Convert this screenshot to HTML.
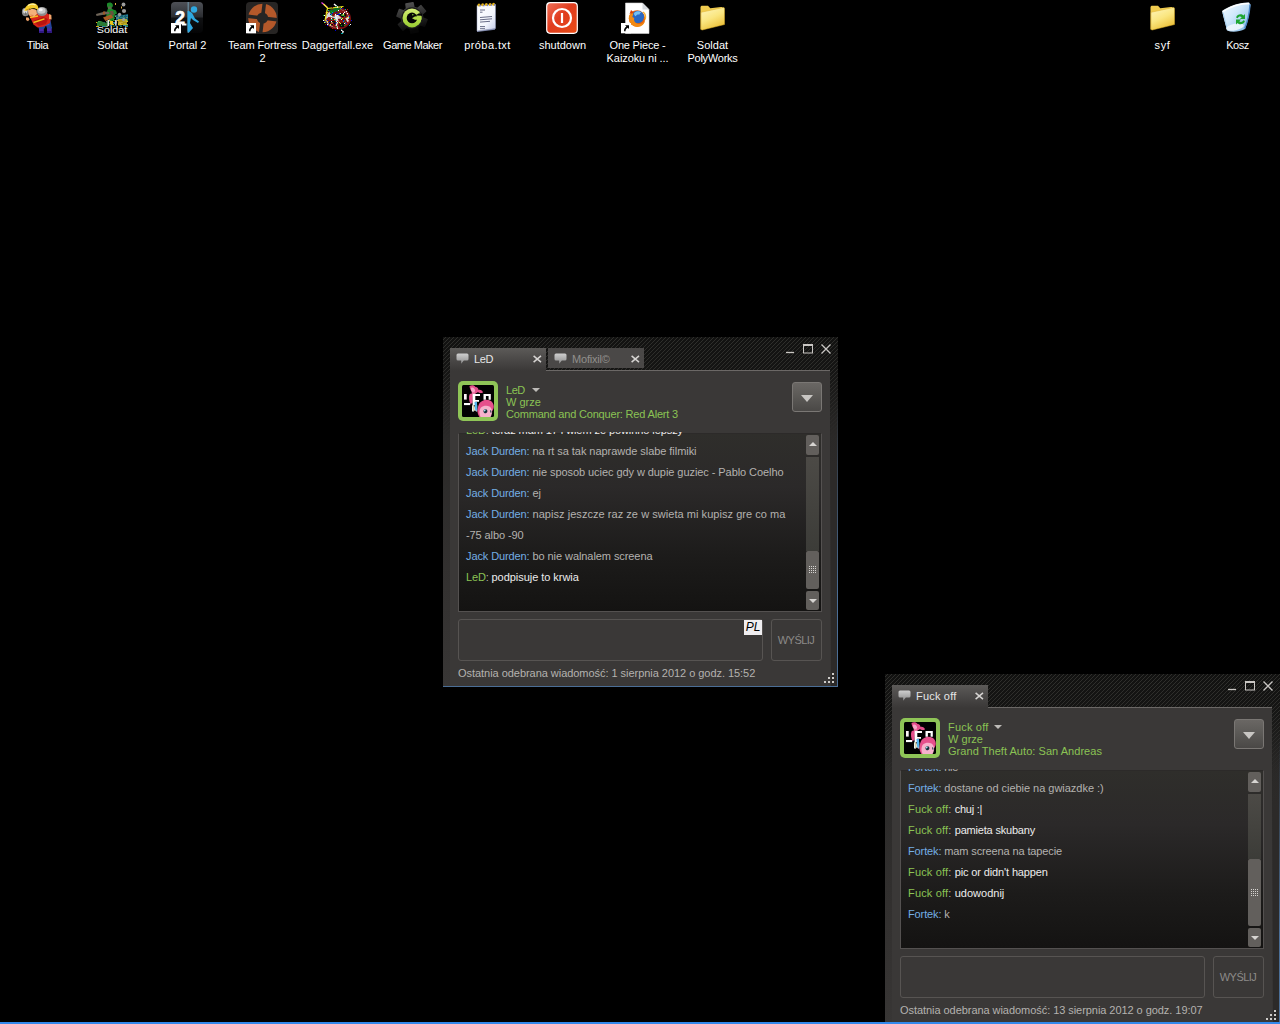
<!DOCTYPE html>
<html lang="pl">
<head>
<meta charset="utf-8">
<title>Pulpit</title>
<style>
html,body{margin:0;padding:0;background:#000;}
body{width:1280px;height:1024px;position:relative;overflow:hidden;font-family:"Liberation Sans",sans-serif;}
.ico{position:absolute;top:0;width:75px;height:70px;text-align:center;color:#fff;font-size:11px;line-height:13px;}
.ico svg{position:absolute;left:21px;top:2px;width:32px;height:32px;}
.ico .lb{position:absolute;left:-5px;width:85px;top:39px;text-shadow:1px 1px 1px #000;}
.taskline{position:absolute;left:0;top:1022px;width:1280px;height:2px;background:#3389ec;}

.win{position:absolute;width:395px;height:350px;overflow:hidden;
 background:repeating-linear-gradient(135deg,#121211 0px,#121211 1.6px,#2f2f2c 1.6px,#2f2f2c 2.8284px);
}
.win .strip{position:absolute;left:0;top:0;width:395px;height:350px;
 background:linear-gradient(to bottom,rgba(40,39,38,0) 0px,rgba(40,39,38,.15) 33px,rgba(42,41,40,.97) 100px,rgba(50,48,47,1) 230px,rgba(56,54,53,1) 350px);}
.win .rstrip{position:absolute;left:388px;top:0;width:7px;height:350px;background:linear-gradient(to bottom,rgba(44,42,41,0) 70px,rgba(44,42,41,1) 140px);}
.win .edge{position:absolute;left:0;top:0;width:395px;height:350px;box-sizing:border-box;pointer-events:none;
 border-bottom:1px solid #4b6e96;}
.win .edge:after{content:"";position:absolute;right:0;top:0;width:1px;height:350px;background:linear-gradient(to bottom,rgba(75,110,150,0) 60px,rgba(75,110,150,1) 260px);}
.panel{position:absolute;left:7px;top:33px;width:380px;height:317px;background:#3a3837;border-top:1px solid #6b6866;box-sizing:border-box;}
.tab{position:absolute;top:11px;height:22px;box-sizing:border-box;font-size:11px;line-height:22px;white-space:nowrap;}
.tab.act{background:linear-gradient(to bottom,#5c5a58 0,#474544 60%,#3a3837 100%);color:#e6e6e6;height:23px;}
.tab.ina{background:#4a4847;color:#918f8c;height:20px;top:11px;line-height:22px;}
.tab .bub{position:absolute;left:6px;top:5px;width:13px;height:12px;}
.tab .tx{position:absolute;left:24px;top:0;}
.tab .cl{position:absolute;top:7px;width:9px;height:9px;}
.wb{position:absolute;}
.av{position:absolute;left:15px;top:44px;width:40px;height:40px;border-radius:5px;background:#8fc557;}
.av svg{position:absolute;left:4px;top:4px;width:32px;height:32px;}
.who{position:absolute;left:63px;top:47px;color:#8bc354;font-size:11px;line-height:12px;white-space:nowrap;}
.who .arr{position:absolute;top:4px;width:0;height:0;border-left:4px solid transparent;border-right:4px solid transparent;border-top:4px solid #bdbbb8;}
.dd{position:absolute;left:349px;top:45px;width:30px;height:30px;border-radius:3px;box-sizing:border-box;border:1px solid #7a7774;background:linear-gradient(to bottom,#6a6764 0,#5c5a57 45%,#4a4846 100%);}
.dd i{position:absolute;left:8px;top:12px;width:0;height:0;border-left:6px solid transparent;border-right:6px solid transparent;border-top:7px solid #c8c6c3;}
.chat{position:absolute;left:15px;top:96px;width:364px;height:179px;box-sizing:border-box;border:1px solid #545150;border-top-color:#2c2a29;background:linear-gradient(to bottom,#2f2e2b 0,#2b2929 30%,#1c1b1a 70%,#141312 100%);overflow:visible;}
.mc{position:absolute;left:0;top:-2px;width:345px;height:178px;overflow:hidden;}
.msg{position:absolute;left:7px;font-size:11px;line-height:13px;color:#b4b2af;white-space:nowrap;}
.msg b{font-weight:normal;color:#74aee4;}
.msg.me b{color:#8bc354;}
.msg.me{color:#ececec;}
.msg.me i{font-style:normal;color:#b4b2af;}
.sb{position:absolute;left:347px;width:13px;border-radius:2px;background:#625f5c;}
.sbt{position:absolute;left:347px;width:13px;background:linear-gradient(to bottom,#4c4a46,#3c3c38);}
.inp{position:absolute;left:15px;top:282px;width:305px;height:42px;box-sizing:border-box;border:1px solid #575452;border-radius:3px;background:#3a3837;}
.pl{position:absolute;left:285px;top:0;width:18px;height:15px;background:#f0eef0;color:#000;font-style:italic;font-size:12px;line-height:14px;text-align:center;}
.send{position:absolute;left:328px;top:282px;width:51px;height:42px;box-sizing:border-box;border:1px solid #575452;border-radius:3px;color:#8c8a88;font-size:11px;line-height:40px;text-align:center;white-space:nowrap;text-indent:-1px;}
.status{position:absolute;left:15px;top:329px;font-size:11px;line-height:14px;color:#b4b2af;white-space:nowrap;}
.grip{position:absolute;left:381px;top:336px;width:11px;height:11px;}
</style>
</head>
<body>
<div class="ico" style="left:0px"><svg viewBox="0 0 32 32">
<path d="M18 25.500h4.700l.3 5.500h-5zM26 25h4.600l.2 6h-4.800z" fill="#4a2aa8"/>
<path d="M18.500 29h4.500v2h-4.800zM26 29h4.800v2h-4.800z" fill="#2e1880"/>
<path d="M15.500 21l14-3 1.500 8.500h-5l-1-3-2 3.500h-5z" fill="#24449a"/>
<path d="M19 22l9-2 .5 3-8 1.500z" fill="#3460c0"/>
<path d="M8.500 14l6-3 9-1.500 6.500 4.500-1 7-6 3.500-6.500 1-4-3z" fill="#d8241a"/>
<path d="M12 19l10-4 5 2-2 5-7 2z" fill="#b81410"/>
<path d="M9 15.500l8-1.500M12.500 20.500l11-3.700" stroke="#f2c21e" stroke-width="1.400" fill="none"/>
<path d="M28 12l2.300 1 .3 4.500-2.600-.5z" fill="#f2a46a"/>
<path d="M5 15.500l2.500 0 1 2-1.500 1.700-2-1.200z" fill="#f2a46a"/>
<ellipse cx="21" cy="9.500" rx="5.400" ry="4.600" fill="#8e8e8e"/><ellipse cx="20.500" cy="8.600" rx="4" ry="3.200" fill="#c8c8c8"/><ellipse cx="19.700" cy="7.800" rx="2" ry="1.500" fill="#f4f4f4"/>
<ellipse cx="4.500" cy="10" rx="3.600" ry="4.200" fill="#8a8a8a"/><ellipse cx="4.200" cy="9" rx="2.200" ry="2.600" fill="#d8d8d8"/>
<path d="M6 14l-2.500-1.500 1-3z" fill="#707070"/>
<path d="M7 8.500c2-1.500 6-2 8.500-.5l.5 4-3.500 3-4.500-1.500z" fill="#f4b07a"/>
<path d="M9 12.500l4 .5-1.500 1.500z" fill="#d88850"/>
<path d="M3.500 9c.5-5 5-8.500 10-7.500 3 .7 4.500 3.500 3.500 6.500-2.500-2-5.500-2.200-8-1-2 1-3.500 2.200-5.500 2z" fill="#f4cc2c"/>
<path d="M7 3.500c2-1.500 5-1.800 7.500-.6" stroke="#fdf2a8" stroke-width="1.300" fill="none"/>
<path d="M5 8c1.500-.3 3-1 4.500-2" stroke="#d09a10" stroke-width="1" fill="none"/>
</svg><div class="lb"><span style="letter-spacing:-0.377px;">Tibia</span></div></div>
<div class="ico" style="left:75px"><svg viewBox="0 0 32 32"><rect x="15" y="22" width="3" height="1" fill="#e0c020"/><rect x="23" y="22" width="2" height="1" fill="#2f8a3a"/><rect x="0" y="20" width="2" height="1" fill="#8a8a8a"/><rect x="14" y="16" width="3" height="1" fill="#1c5a70"/><rect x="30" y="19" width="3" height="1" fill="#e0c020"/><rect x="14" y="23" width="1" height="1" fill="#8a8a8a"/><rect x="24" y="24" width="1" height="1" fill="#2f8a3a"/><rect x="10" y="22" width="1" height="1" fill="#15401e"/><rect x="30" y="22" width="3" height="1" fill="#d8b018"/><rect x="27" y="19" width="3" height="1" fill="#1c5a70"/><rect x="8" y="20" width="1" height="1" fill="#15401e"/><rect x="27" y="23" width="2" height="1" fill="#d8b018"/><rect x="24" y="22" width="2" height="1" fill="#8a8a8a"/><rect x="26" y="22" width="1" height="1" fill="#3fa04a"/><rect x="10" y="24" width="2" height="1" fill="#8a8a8a"/><rect x="6" y="24" width="3" height="1" fill="#2a86a8"/><rect x="17" y="17" width="1" height="1" fill="#2f8a3a"/><rect x="30" y="23" width="2" height="1" fill="#2f8a3a"/><rect x="22" y="14" width="2" height="1" fill="#e0c020"/><rect x="27" y="19" width="1" height="1" fill="#1f6a2a"/><rect x="2" y="19" width="3" height="1" fill="#3fa04a"/><rect x="17" y="21" width="1" height="1" fill="#1f6a2a"/><rect x="19" y="13" width="1" height="1" fill="#2f8a3a"/><rect x="26" y="17" width="3" height="1" fill="#15401e"/><rect x="9" y="24" width="1" height="1" fill="#3fa04a"/><rect x="20" y="18" width="1" height="1" fill="#d8b018"/><rect x="24" y="20" width="3" height="1" fill="#d8b018"/><rect x="6" y="22" width="3" height="1" fill="#15401e"/><rect x="27" y="23" width="3" height="1" fill="#2a86a8"/><rect x="19" y="19" width="2" height="1" fill="#8a8a8a"/><rect x="19" y="21" width="2" height="1" fill="#1f6a2a"/><rect x="26" y="22" width="2" height="1" fill="#1f6a2a"/><rect x="24" y="22" width="3" height="1" fill="#e0c020"/><rect x="3" y="23" width="3" height="1" fill="#3fa04a"/><rect x="29" y="18" width="3" height="1" fill="#3fa04a"/><rect x="17" y="24" width="2" height="1" fill="#1f6a2a"/><rect x="3" y="23" width="1" height="1" fill="#3fa04a"/><rect x="16" y="23" width="2" height="1" fill="#15401e"/><rect x="20" y="15" width="2" height="1" fill="#e0c020"/><rect x="20" y="18" width="3" height="1" fill="#15401e"/><rect x="19" y="19" width="1" height="1" fill="#1f6a2a"/><rect x="14" y="23" width="2" height="1" fill="#2a86a8"/><rect x="20" y="15" width="3" height="1" fill="#d8b018"/><rect x="20" y="18" width="3" height="1" fill="#2a86a8"/><rect x="28" y="15" width="1" height="1" fill="#3fa04a"/><rect x="13" y="22" width="2" height="1" fill="#15401e"/><rect x="14" y="14" width="1" height="1" fill="#8a8a8a"/><rect x="12" y="18" width="3" height="1" fill="#e0c020"/><rect x="17" y="18" width="3" height="1" fill="#2f8a3a"/><rect x="22" y="22" width="1" height="1" fill="#d8b018"/><rect x="18" y="21" width="2" height="1" fill="#1c5a70"/><rect x="22" y="23" width="2" height="1" fill="#15401e"/><rect x="26" y="22" width="2" height="1" fill="#1f6a2a"/><rect x="26" y="15" width="1" height="1" fill="#1f6a2a"/><rect x="30" y="22" width="3" height="1" fill="#d8b018"/><rect x="14" y="13" width="3" height="1" fill="#1c5a70"/><rect x="18" y="21" width="2" height="1" fill="#2a86a8"/><rect x="4" y="22" width="2" height="1" fill="#2f8a3a"/><rect x="15" y="13" width="1" height="1" fill="#8a8a8a"/><rect x="12" y="19" width="3" height="1" fill="#1f6a2a"/><rect x="0" y="20" width="3" height="1" fill="#2f8a3a"/><rect x="10" y="21" width="2" height="1" fill="#2a86a8"/><rect x="1" y="21" width="3" height="1" fill="#d8b018"/><rect x="3" y="22" width="1" height="1" fill="#3fa04a"/><rect x="30" y="13" width="2" height="1" fill="#2a86a8"/><rect x="12" y="14" width="3" height="1" fill="#2f8a3a"/><rect x="10" y="16" width="2" height="1" fill="#e0c020"/><rect x="0" y="20" width="3" height="1" fill="#d8b018"/><rect x="15" y="17" width="3" height="1" fill="#8a8a8a"/><rect x="27" y="13" width="2" height="1" fill="#3fa04a"/><rect x="4" y="20" width="1" height="1" fill="#2f8a3a"/><rect x="31" y="18" width="1" height="1" fill="#3fa04a"/><rect x="24" y="23" width="2" height="1" fill="#15401e"/><rect x="23" y="17" width="1" height="1" fill="#3fa04a"/><rect x="27" y="14" width="1" height="1" fill="#8a8a8a"/><rect x="0" y="24" width="3" height="1" fill="#d8b018"/><rect x="5" y="22" width="1" height="1" fill="#1f6a2a"/><rect x="23" y="20" width="3" height="1" fill="#8a8a8a"/><rect x="24" y="23" width="1" height="1" fill="#d8b018"/><rect x="31" y="24" width="2" height="1" fill="#d8b018"/><rect x="26" y="20" width="1" height="1" fill="#2a86a8"/><rect x="13" y="21" width="2" height="1" fill="#2f8a3a"/><rect x="27" y="16" width="2" height="1" fill="#e0c020"/><rect x="23" y="21" width="2" height="1" fill="#2f8a3a"/><rect x="29" y="24" width="1" height="1" fill="#8a8a8a"/><rect x="24" y="23" width="1" height="1" fill="#3fa04a"/><rect x="6" y="22" width="3" height="1" fill="#1f6a2a"/><rect x="30" y="15" width="1" height="1" fill="#d8b018"/><rect x="2" y="21" width="1" height="1" fill="#2f8a3a"/><rect x="24" y="15" width="1" height="1" fill="#3fa04a"/><rect x="7" y="23" width="2" height="1" fill="#15401e"/><rect x="19" y="14" width="1" height="1" fill="#8a8a8a"/><rect x="15" y="14" width="3" height="1" fill="#2f8a3a"/><rect x="3" y="21" width="2" height="1" fill="#e0c020"/><rect x="11" y="23" width="1" height="1" fill="#1c5a70"/><rect x="25" y="17" width="2" height="1" fill="#d8b018"/><rect x="22" y="21" width="2" height="1" fill="#2f8a3a"/><rect x="24" y="21" width="1" height="1" fill="#d8b018"/><rect x="10" y="19" width="3" height="1" fill="#8a8a8a"/><rect x="30" y="15" width="3" height="1" fill="#d8b018"/><rect x="6" y="20" width="3" height="1" fill="#1c5a70"/><rect x="28" y="22" width="3" height="1" fill="#e0c020"/><rect x="12" y="15" width="3" height="1" fill="#8a8a8a"/><rect x="20" y="16" width="3" height="1" fill="#8a8a8a"/><rect x="18" y="23" width="3" height="1" fill="#d8b018"/><rect x="17" y="16" width="2" height="1" fill="#1f6a2a"/><rect x="17" y="20" width="2" height="1" fill="#2a86a8"/><rect x="11" y="22" width="2" height="1" fill="#2a86a8"/><rect x="20" y="20" width="1" height="1" fill="#d8b018"/><rect x="30" y="24" width="3" height="1" fill="#2a86a8"/><rect x="29" y="22" width="3" height="1" fill="#8a8a8a"/><rect x="1" y="20" width="3" height="1" fill="#2f8a3a"/><rect x="25" y="24" width="1" height="1" fill="#1c5a70"/><rect x="14" y="16" width="3" height="1" fill="#2f8a3a"/><rect x="13" y="17" width="1" height="1" fill="#2a86a8"/><rect x="16" y="15" width="1" height="1" fill="#1f6a2a"/><rect x="16" y="15" width="1" height="1" fill="#3fa04a"/><rect x="11" y="19" width="1" height="1" fill="#2f8a3a"/><rect x="16" y="17" width="1" height="1" fill="#3fa04a"/><rect x="28" y="22" width="3" height="1" fill="#3fa04a"/><rect x="21" y="18" width="2" height="1" fill="#d8b018"/><rect x="31" y="14" width="1" height="1" fill="#1c5a70"/><rect x="25" y="15" width="3" height="1" fill="#3fa04a"/><rect x="4" y="23" width="2" height="1" fill="#2f8a3a"/><rect x="28" y="21" width="2" height="1" fill="#2f8a3a"/><rect x="23" y="23" width="2" height="1" fill="#1c5a70"/><rect x="18" y="23" width="3" height="1" fill="#15401e"/><path d="M20 13l3-1 4 1 5-1v6h-12z" fill="#207a9a" opacity=".75"/><path d="M22 17h9v6h-9z" fill="#d8b820" opacity=".8"/><path d="M1 21l4-2 4 2 4-2v5h-12z" fill="#2a7a34"/><path d="M11 1.500c1.500-1.500 4.500-1.500 5.500.5 1 1.500 0 3.500-1.500 4l2 1.500 3 1 1 3-2 1-1 5-3 2-2-3-3-1 1-6 1-3-1-2.500z" fill="#1c8a2a"/><path d="M12 4.500h3.500v2.500h-3.500z" fill="#5a6a4a"/><path d="M14 9l3 0 1 4-3 1z" fill="#6a5240"/><path d="M0 12l9-2.500 4 .5.500 2-4.500.5-8.500 1.500z" fill="#6e6458"/><path d="M7 9.500h2v3h-2z" fill="#a05a28"/><path d="M7 15.500l8-3 2.500 3-8 3.500z" fill="#a85a24"/><path d="M11.500 18h1.600v6h-1.600z" fill="#e4e4e4"/><path d="M19 18h1.600v5.500h-1.600z" fill="#d0d0d0"/><path d="M14 19h3v3.500h-3z" fill="#e8c41c"/><circle cx="27.5" cy="2.5" r="1.9" fill="#9c9c9c"/><circle cx="28.0" cy="9.0" r="2.1" fill="#9c9c9c"/><circle cx="23.5" cy="12.5" r="1.7" fill="#9c9c9c"/><circle cx="27.5" cy="17.5" r="1.5" fill="#9c9c9c"/><rect x="19" y="1" width="1" height="2" fill="#e0b040"/><rect x="25" y="4.500" width="1" height="2" fill="#e0b040"/><rect x="0" y="25" width="32" height="7" fill="#000"/><text x="16" y="31.300" font-family="Liberation Sans,sans-serif" font-size="9" text-anchor="middle" fill="#fff" textLength="30.500" lengthAdjust="spacingAndGlyphs">Soldat</text></svg><div class="lb"><span style="letter-spacing:-0.109px;">Soldat</span></div></div>
<div class="ico" style="left:150px"><svg viewBox="0 0 32 32"><defs><linearGradient id="pg" x1="0" y1="0" x2="0" y2="1"><stop offset="0" stop-color="#4e5157"/><stop offset=".48" stop-color="#2b2d31"/><stop offset=".52" stop-color="#101113"/><stop offset="1" stop-color="#040405"/></linearGradient></defs>
<rect x="0" y="0" width="32" height="31" rx="4" fill="url(#pg)"/>
<rect x="16.600" y="0" width="1.200" height="31" fill="#6d8ea0"/>
<text x="4.300" y="21.500" style="font:bold 17.500px 'Liberation Sans',sans-serif" fill="#fff" stroke="#fff" stroke-width=".7">2</text>
<rect x="11" y="21.500" width="4.500" height="2" fill="#fff"/>
<circle cx="23" cy="7.500" r="3.200" fill="#2fa8e0"/>
<path d="M18 9l3 2 3 5.500 4 3-1 1.500-5-3-2-2-1 5 3 5-4 4.500-1.500-1v-20.500z" fill="#2fa8e0"/>
<g><rect x="0" y="21" width="10" height="10.300" fill="#fff"/><path d="M8 23.300h-4l1.400 1.300c-1.900 1.300-2.600 2.800-2.300 4.700l1.500 0c-.2-1.500.6-2.600 2.100-3.500l1.300 1.300z" fill="#000"/></g></svg><div class="lb"><span style="letter-spacing:-0.015px;">Portal 2</span></div></div>
<div class="ico" style="left:225px"><svg viewBox="0 0 32 32"><rect x="0" y="0" width="32" height="32" rx="4" fill="#272524"/>
<circle cx="16.500" cy="16" r="14.300" fill="#b4582a"/>
<g transform="rotate(7 16.500 16)"><path d="M16.500 1v30M1.500 16h30" stroke="#272524" stroke-width="3.600"/></g>
<circle cx="16.500" cy="16" r="5.600" fill="#272524"/>
<g><rect x="0" y="21" width="10" height="10.300" fill="#fff"/><path d="M8 23.300h-4l1.400 1.300c-1.900 1.300-2.600 2.800-2.300 4.700l1.500 0c-.2-1.500.6-2.600 2.100-3.500l1.300 1.300z" fill="#000"/></g></svg><div class="lb"><span style="letter-spacing:-0.096px;">Team Fortress</span><br>2</div></div>
<div class="ico" style="left:300px"><svg viewBox="0 0 32 32"><ellipse cx="17" cy="16.500" rx="13" ry="11" fill="#7c1010"/><ellipse cx="16.500" cy="16.500" rx="11.500" ry="9.500" fill="#d8d8d8"/><path d="M8 9c3-3 8-4 12-2.500l-2 5.500-7 2.500z" fill="#0c7024"/><path d="M10 12l6-3 2 1-5 5z" fill="#8a1414"/><path d="M5 17c2 4 6 8 10 9l3-4-5-6-5-1z" fill="#861212"/><path d="M18 7.500c4 0 8 3 9.500 7l-5 3-5-4z" fill="#8c1616"/><path d="M16 17l8-1 3 5-4 5-6 0z" fill="#801212"/><path d="M14 13l3 6-2 5" stroke="#f4f4f4" stroke-width="1.200" fill="none"/><ellipse cx="22" cy="13" rx="3.300" ry="2.100" fill="#0c0c0c"/><ellipse cx="22" cy="13" rx="1.500" ry=".9" fill="#30d848"/><rect x="21.500" y="12.500" width="1" height="1" fill="#f03030"/><ellipse cx="11" cy="21" rx="3.500" ry="2.200" fill="#0c0c0c"/><ellipse cx="11" cy="21" rx="1.500" ry=".9" fill="#f03030"/><rect x="10.500" y="20" width="1" height="1" fill="#30d848"/><ellipse cx="21" cy="23" rx="2.800" ry="2.300" fill="#0c0c0c"/><path d="M.5 .5l6 5" stroke="#f040f0" stroke-width="1.200"/><path d="M2.500 2l4 4-3 15M6.500 6.500l16-2" stroke="#f0f020" stroke-width="1.200" fill="none"/><path d="M13 2l4 3.500" stroke="#fff" stroke-width="1.400"/><rect x="7" y="18" width="1" height="1" fill="#7c1010"/><rect x="3" y="19" width="1" height="1" fill="#0000d0"/><rect x="20" y="23" width="1" height="1" fill="#10a020"/><rect x="22" y="19" width="1" height="1" fill="#00a8a8"/><rect x="3" y="13" width="1" height="1" fill="#fff"/><rect x="10" y="12" width="1" height="1" fill="#7c1010"/><rect x="10" y="9" width="1" height="1" fill="#10a020"/><rect x="7" y="8" width="1" height="1" fill="#00a8a8"/><rect x="22" y="18" width="1" height="1" fill="#0000d0"/><rect x="6" y="10" width="1" height="1" fill="#f0f020"/><rect x="4" y="20" width="1" height="1" fill="#0000d0"/><rect x="11" y="10" width="1" height="1" fill="#00a8a8"/><rect x="10" y="17" width="1" height="1" fill="#00a8a8"/><rect x="15" y="10" width="1" height="1" fill="#0000d0"/><rect x="13" y="16" width="1" height="1" fill="#00a8a8"/><rect x="6" y="22" width="1" height="1" fill="#fff"/><rect x="20" y="17" width="1" height="1" fill="#fff"/><rect x="20" y="28" width="1" height="1" fill="#fff"/><rect x="2" y="18" width="1" height="1" fill="#fff"/><rect x="8" y="20" width="1" height="1" fill="#0000d0"/><rect x="18" y="11" width="1" height="1" fill="#00a8a8"/><rect x="15" y="19" width="1" height="1" fill="#fff"/><rect x="17" y="12" width="1" height="1" fill="#0000d0"/><rect x="16" y="13" width="1" height="1" fill="#7c1010"/><rect x="18" y="12" width="1" height="1" fill="#0000d0"/><rect x="11" y="17" width="1" height="1" fill="#10a020"/><rect x="10" y="19" width="1" height="1" fill="#fff"/><rect x="11" y="18" width="1" height="1" fill="#c01010"/><rect x="26" y="7" width="1" height="1" fill="#c01010"/><rect x="20" y="16" width="1" height="1" fill="#10a020"/><rect x="6" y="23" width="1" height="1" fill="#00a8a8"/><rect x="21" y="17" width="1" height="1" fill="#7c1010"/><rect x="16" y="26" width="1" height="1" fill="#f0f020"/><rect x="20" y="10" width="1" height="1" fill="#00a8a8"/><rect x="25" y="21" width="1" height="1" fill="#0000d0"/><rect x="24" y="17" width="1" height="1" fill="#7c1010"/><rect x="24" y="22" width="1" height="1" fill="#10a020"/><rect x="20" y="13" width="1" height="1" fill="#10a020"/><rect x="14" y="21" width="1" height="1" fill="#0000d0"/><rect x="16" y="12" width="1" height="1" fill="#0000d0"/><rect x="13" y="10" width="1" height="1" fill="#7c1010"/><rect x="10" y="12" width="1" height="1" fill="#00a8a8"/><rect x="24" y="21" width="1" height="1" fill="#c01010"/><rect x="17" y="26" width="1" height="1" fill="#c01010"/><rect x="4" y="22" width="1" height="1" fill="#7c1010"/><rect x="15" y="20" width="1" height="1" fill="#00a8a8"/><rect x="23" y="21" width="1" height="1" fill="#00a8a8"/><rect x="14" y="28" width="1" height="1" fill="#0000d0"/><rect x="16" y="13" width="1" height="1" fill="#fff"/><rect x="13" y="17" width="1" height="1" fill="#10a020"/><rect x="15" y="24" width="1" height="1" fill="#10a020"/><rect x="21" y="18" width="1" height="1" fill="#7c1010"/><rect x="28" y="15" width="1" height="1" fill="#10a020"/><rect x="4" y="10" width="1" height="1" fill="#7c1010"/><rect x="26" y="11" width="1" height="1" fill="#fff"/><rect x="27" y="17" width="1" height="1" fill="#7c1010"/><rect x="23" y="18" width="1" height="1" fill="#10a020"/><rect x="21" y="16" width="1" height="1" fill="#f0f020"/><rect x="15" y="4" width="1" height="1" fill="#10a020"/><rect x="20" y="5" width="1" height="1" fill="#f0f020"/><rect x="24" y="20" width="1" height="1" fill="#00a8a8"/><rect x="22" y="11" width="1" height="1" fill="#fff"/><rect x="23" y="10" width="1" height="1" fill="#fff"/><rect x="14" y="18" width="1" height="1" fill="#00a8a8"/><rect x="26" y="20" width="1" height="1" fill="#c01010"/><rect x="25" y="9" width="1" height="1" fill="#fff"/><rect x="27" y="12" width="1" height="1" fill="#7c1010"/><rect x="4" y="20" width="1" height="1" fill="#00a8a8"/><rect x="7" y="15" width="1" height="1" fill="#c01010"/><rect x="9" y="12" width="1" height="1" fill="#0000d0"/><rect x="21" y="15" width="1" height="1" fill="#7c1010"/><rect x="16" y="19" width="1" height="1" fill="#c01010"/><rect x="23" y="23" width="1" height="1" fill="#10a020"/><rect x="17" y="10" width="1" height="1" fill="#7c1010"/><rect x="10" y="16" width="1" height="1" fill="#fff"/><rect x="14" y="12" width="1" height="1" fill="#fff"/><rect x="21" y="6" width="1" height="1" fill="#0000d0"/><rect x="22" y="12" width="1" height="1" fill="#f0f020"/><rect x="18" y="20" width="1" height="1" fill="#f0f020"/><rect x="24" y="7" width="1" height="1" fill="#00a8a8"/><rect x="23" y="14" width="1" height="1" fill="#10a020"/><rect x="23" y="21" width="1" height="1" fill="#0000d0"/><rect x="20" y="10" width="1" height="1" fill="#7c1010"/><rect x="11" y="7" width="1" height="1" fill="#7c1010"/><rect x="11" y="26" width="1" height="1" fill="#c01010"/><rect x="19" y="14" width="1" height="1" fill="#c01010"/><rect x="10" y="14" width="1" height="1" fill="#fff"/><rect x="11" y="11" width="1" height="1" fill="#0000d0"/><rect x="30" y="18" width="1" height="1" fill="#0000d0"/><rect x="19" y="6" width="1" height="1" fill="#00a8a8"/><rect x="6" y="19" width="1" height="1" fill="#f0f020"/><rect x="28" y="14" width="1" height="1" fill="#0000d0"/><rect x="19" y="11" width="1" height="1" fill="#fff"/><rect x="17" y="8" width="1" height="1" fill="#fff"/><rect x="19" y="21" width="1" height="1" fill="#f0f020"/><rect x="2" y="13" width="1" height="1" fill="#10a020"/><rect x="6" y="23" width="1" height="1" fill="#0000d0"/><rect x="29" y="22" width="1" height="1" fill="#fff"/><rect x="23" y="21" width="1" height="1" fill="#fff"/><rect x="9" y="22" width="1" height="1" fill="#f0f020"/><rect x="6" y="18" width="1" height="1" fill="#0000d0"/><rect x="28" y="23" width="1" height="1" fill="#00a8a8"/><rect x="20" y="27" width="1" height="1" fill="#00a8a8"/><rect x="26" y="15" width="1" height="1" fill="#f0f020"/><rect x="16" y="26" width="1" height="1" fill="#fff"/><rect x="14" y="19" width="1" height="1" fill="#7c1010"/><rect x="12" y="22" width="1" height="1" fill="#c01010"/><rect x="13" y="16" width="1" height="1" fill="#00a8a8"/><rect x="13" y="17" width="1" height="1" fill="#f0f020"/><rect x="11" y="5" width="1" height="1" fill="#7c1010"/><path d="M21 28l2 1.500-1.500 3z" fill="#fff"/><rect x="20" y="31" width="2" height="1" fill="#00a8a8"/></svg><div class="lb"><span style="letter-spacing:0.026px;">Daggerfall.exe</span></div></div>
<div class="ico" style="left:375px"><svg viewBox="0 0 32 32"><defs><linearGradient id="gg" x1="0" y1="0" x2=".25" y2="1"><stop offset="0" stop-color="#585858"/><stop offset=".55" stop-color="#2a2a2a"/><stop offset="1" stop-color="#060606"/></linearGradient><linearGradient id="gl" x1="0" y1="0" x2="0" y2="1"><stop offset="0" stop-color="#d4ec7a"/><stop offset=".5" stop-color="#b6de4c"/><stop offset="1" stop-color="#98cc34"/></linearGradient></defs><polygon points="10.5,6.6 9.9,2.0 17.0,0.7 18.0,5.3 21.3,6.5 25.0,3.6 29.6,9.2 26.2,12.3 26.8,15.8 31.1,17.6 28.6,24.3 24.2,22.9 21.5,25.2 22.1,29.8 15.0,31.1 14.0,26.5 10.7,25.3 7.0,28.2 2.4,22.6 5.8,19.5 5.2,16.0 0.9,14.2 3.4,7.5 7.8,8.9" fill="url(#gg)" stroke="url(#gg)" stroke-width="1.400" stroke-linejoin="round"/><circle cx="16.0" cy="15.9" r="10.600" fill="#1c1c1c"/><circle cx="16.0" cy="15.9" r="9.500" fill="url(#gl)"/><circle cx="16.0" cy="15.9" r="5.300" fill="#050505"/><path d="M16 16.300l2.800-1.800 6.700-.7v3.900h-6.500z" fill="#b0da48"/><path d="M19.500 13.600l3.500-2.400 3.300.6-.5 1.900z" fill="#050505"/><circle cx="16.800" cy="12.800" r=".8" fill="#8cc63c"/></svg><div class="lb"><span style="letter-spacing:-0.478px;">Game Maker</span></div></div>
<div class="ico" style="left:450px"><svg viewBox="0 0 32 32"><defs><linearGradient id="ng" x1="0" y1="0" x2="1" y2="1"><stop offset="0" stop-color="#fff"/><stop offset=".6" stop-color="#f4f6fd"/><stop offset="1" stop-color="#c2cae8"/></linearGradient></defs>
<path d="M6 28.500l18-2.200v1.400l-18 2.300z" fill="#7880a4"/>
<path d="M6 3.500l18.500-1 0 24-18.500 2.500z" fill="url(#ng)" stroke="#98a0c0" stroke-width=".5"/>
<g fill="#e2b21c"><circle cx="8" cy="3" r="1.500"/><circle cx="11.700" cy="2.800" r="1.500"/><circle cx="15.400" cy="2.600" r="1.500"/><circle cx="19.100" cy="2.400" r="1.500"/><circle cx="22.600" cy="2.200" r="1.500"/></g>
<g fill="#6a78d8"><rect x="8.500" y="3" width="1.200" height="1.500"/><rect x="12.200" y="2.800" width="1.200" height="1.500"/><rect x="15.900" y="2.600" width="1.200" height="1.500"/><rect x="19.600" y="2.400" width="1.200" height="1.500"/><rect x="23" y="2.200" width="1.200" height="1.500"/></g>
<path d="M9 8h5M9 10.200h2.500M9 15.500l12-1M9 17.800l12-1M9 20.100l10-.8M9 24.600h5M9 26.700h5" stroke="#585c78" stroke-width=".9"/>
</svg><div class="lb"><span style="letter-spacing:0.415px;">próba.txt</span></div></div>
<div class="ico" style="left:525px"><svg viewBox="0 0 32 32"><defs><linearGradient id="sg" x1="0" y1="0" x2="1" y2="1"><stop offset="0" stop-color="#f0705a"/><stop offset=".45" stop-color="#e03c1e"/><stop offset="1" stop-color="#e84c14"/></linearGradient></defs>
<rect x="0.700" y="0.700" width="30.600" height="30.600" rx="3.500" fill="url(#sg)" stroke="#fff" stroke-width="1.200"/>
<circle cx="16" cy="16" r="9" fill="none" stroke="#fff" stroke-width="2.200"/>
<rect x="14.900" y="11" width="2.200" height="10" fill="#fff"/></svg><div class="lb"><span style="letter-spacing:-0.005px;">shutdown</span></div></div>
<div class="ico" style="left:600px"><svg viewBox="0 0 32 32"><path d="M4.500 1h17l6.500 6.500v24h-23.500z" fill="#fff" stroke="#d4d4d4" stroke-width=".6"/><path d="M21.500 1v6.500h6.500z" fill="#d4d8dc"/>
<circle cx="16" cy="16.500" r="8.200" fill="#e8640a"/>
<circle cx="16.800" cy="15" r="6.200" fill="#2868c4"/><path d="M13 11c2-2 5.500-2.200 7.500-.5-1 .2-2 1-2.200 2.200-1.300-.5-3 .2-3.500 1.500-1.200-.5-2-1.800-1.800-3.200z" fill="#74c0f4"/>
<path d="M7.800 15c0 5.800 3.700 10 8.700 10 4 0 7.200-3 7.700-7-1.200 3-3.700 4.500-6.700 4-3-.5-5.200-3-4.200-6l-2-1 1.200-3.800c-2.500 0-4.700 1.500-4.700 3.800z" fill="#f28a14"/>
<path d="M8.500 12l1.500-4 3 2.500z" fill="#dc4408"/>
<path d="M22 10c2 1.500 3 4.500 2.200 7.500" stroke="#f8b030" stroke-width="1.400" fill="none"/>
<g><rect x="0" y="21" width="10" height="10.300" fill="#fff"/><path d="M8 23.300h-4l1.400 1.300c-1.900 1.300-2.600 2.800-2.300 4.700l1.500 0c-.2-1.500.6-2.600 2.100-3.500l1.300 1.300z" fill="#000"/></g></svg><div class="lb"><span style="letter-spacing:-0.209px;">One Piece -</span><br><span style="letter-spacing:-0.085px;">Kaizoku ni ...</span></div></div>
<div class="ico" style="left:675px"><svg viewBox="0 0 32 32"><defs><linearGradient id="fg" x1="0" y1="0" x2=".5" y2="1"><stop offset="0" stop-color="#fef6c0"/><stop offset=".55" stop-color="#fae680"/><stop offset="1" stop-color="#ecc23c"/></linearGradient></defs>
<path d="M4.500 5.500c0-1.200.6-1.800 1.800-1.800h5.700l2.300 2.600 10.700-1.300c1.200 0 1.800.6 1.800 1.800v15.200l-22.300 5.500z" fill="#f0cc50"/>
<path d="M5 10.300l22.300-4.800c.8 0 1.200.5 1.200 1.300v15.700l-22.300 5.500c-.8 0-1.200-.5-1.200-1.200z" fill="url(#fg)" stroke="#dcae28" stroke-width=".5"/>
</svg><div class="lb"><span style="letter-spacing:0.041px;">Soldat</span><br><span style="letter-spacing:-0.247px;">PolyWorks</span></div></div>
<div class="ico" style="left:1125px"><svg viewBox="0 0 32 32"><defs><linearGradient id="fg2" x1="0" y1="0" x2=".5" y2="1"><stop offset="0" stop-color="#fef6c0"/><stop offset=".55" stop-color="#fae680"/><stop offset="1" stop-color="#ecc23c"/></linearGradient></defs>
<path d="M4.500 5.500c0-1.200.6-1.800 1.800-1.800h5.700l2.300 2.600 10.700-1.300c1.200 0 1.800.6 1.800 1.800v15.200l-22.300 5.500z" fill="#f0cc50"/>
<path d="M5 10.300l22.300-4.800c.8 0 1.200.5 1.200 1.300v15.700l-22.300 5.500c-.8 0-1.200-.5-1.200-1.200z" fill="url(#fg2)" stroke="#dcae28" stroke-width=".5"/>
</svg><div class="lb"><span style="letter-spacing:0.600px;">syf</span></div></div>
<div class="ico" style="left:1200px"><svg viewBox="0 0 32 32"><defs><linearGradient id="rb" x1="0" y1="0" x2="1" y2=".9"><stop offset="0" stop-color="#f4fbff"/><stop offset=".45" stop-color="#cfe8fb"/><stop offset="1" stop-color="#7cb4e4"/></linearGradient></defs>
<path d="M1 9c7-5 18-9 27-8.500l1.500 2c-1 8-2.500 17-5.500 24.500-6 3-13 3.500-18 1.500-1.500-6-3.500-13-5-19.500z" fill="url(#rb)"/>
<path d="M2 9.500c7-4.500 17-8 26-8" stroke="#fff" stroke-width="1.300" fill="none"/>
<path d="M2 10.500c1.500 6 3 12 4.500 17.500" stroke="#a8d0f0" stroke-width="1" fill="none"/>
<ellipse cx="14" cy="25" rx="9" ry="3.300" fill="#f2f9ff" opacity=".85" transform="rotate(-12 14 25)"/>
<path d="M29 2.500c-.5 8-2.500 17-5.300 24" stroke="#4a86c8" stroke-width="1.400" fill="none"/>
<path d="M15 15.500c1.200-3.500 5.500-4.300 7.500-2l1.500-1.500v5h-5l1.700-1.700c-1.300-1.300-3.300-.8-3.900 1zM24 19c-1.200 3.500-5.500 4.300-7.500 2l-1.500 1.500v-5h5l-1.700 1.700c1.300 1.300 3.300.8 3.900-1z" fill="#1ea632"/>
</svg><div class="lb"><span style="letter-spacing:-0.442px;">Kosz</span></div></div>
<div class="win" style="left:443px;top:337px">
<div class="strip"></div>
<div class="rstrip"></div>
<div class="panel"></div>
<div class="tab act" style="left:7px;width:96px"><svg class="bub" viewBox="0 0 13 12"><defs><linearGradient id="bg10" x1="0" y1="0" x2="0" y2="1"><stop offset="0" stop-color="#cfcfcf"/><stop offset="1" stop-color="#8c8c8c"/></linearGradient></defs><path d="M2 0.500h9a1.500 1.500 0 0 1 1.500 1.500v4a1.500 1.500 0 0 1 -1.500 1.500h-3.200l-2.600 3.300v-3.300h-3.200a1.500 1.500 0 0 1 -1.500 -1.500v-4a1.500 1.500 0 0 1 1.500 -1.500z" fill="url(#bg10)"/></svg><span class="tx"><span style="letter-spacing:-0.329px;">LeD</span></span><svg class="cl" style="left:83px" viewBox="0 0 9 9"><path d="M0.600 0.900l7.400 6.200M8 0.900l-7.400 6.200" stroke="#d6d4d2" stroke-width="1.500" fill="none"/></svg></div>
<div class="tab ina" style="left:105px;width:96px"><svg class="bub" viewBox="0 0 13 12"><defs><linearGradient id="bg11" x1="0" y1="0" x2="0" y2="1"><stop offset="0" stop-color="#cfcfcf"/><stop offset="1" stop-color="#8c8c8c"/></linearGradient></defs><path d="M2 0.500h9a1.500 1.500 0 0 1 1.500 1.500v4a1.500 1.500 0 0 1 -1.500 1.500h-3.200l-2.600 3.300v-3.300h-3.200a1.500 1.500 0 0 1 -1.500 -1.500v-4a1.500 1.500 0 0 1 1.500 -1.500z" fill="url(#bg11)"/></svg><span class="tx"><span style="letter-spacing:-0.185px;">Mofixil©</span></span><svg class="cl" style="left:83px" viewBox="0 0 9 9"><path d="M0.600 0.900l7.400 6.200M8 0.900l-7.400 6.200" stroke="#d6d4d2" stroke-width="1.500" fill="none"/></svg></div>
<svg class="wb" style="left:343px;top:7px;width:46px;height:10px" viewBox="0 0 46 10"><path d="M0 8.500h8" stroke="#c9c6c3" stroke-width="1.300" fill="none"/><rect x="17.500" y="1" width="9" height="8" fill="none" stroke="#c9c6c3" stroke-width="1"/><path d="M17 1h10" stroke="#c9c6c3" stroke-width="2"/><path d="M35.500 0.500l9 9M44.500 0.500l-9 9" stroke="#c9c6c3" stroke-width="1.300" fill="none"/></svg>
<div class="av"><svg viewBox="0 0 32 32"><rect width="32" height="32" rx="1.500" fill="#020202"/>
<path d="M7.500 1c2-1.500 5-1 6 1 2 0 3 1.500 3 3 2-.5 4 .5 4.500 2.500-2 1-4 .5-5-.5-1.500 1.500-4 1.500-5.500.5-1.500-1.500-3-4-3-6.500z" fill="#e4508c"/>
<path d="M9 3c1.500-1 3.500 0 4 2 .3 1.500-1 2.700-2.500 2.300-1.200-.8-1.700-2.800-1.500-4.300z" fill="#f4a8c6"/>
<path d="M9.500 6.500c1 .8 2.500 1 3.500.5l1 2.500-3.500 1z" fill="#ee7aa8"/>
<path d="M7.500 9.500c1.500-1.500 3-1 3.500.5l-.5 8-2 1c-1.500-3-2-6.500-1-9.500z" fill="#e4508c"/>
<path d="M2 9h2.700v5.600h-2.700z" fill="#fdf4f6"/><path d="M2 18h6.200v2.100h-6.200z" fill="#fff"/>
<path d="M10.600 9h7.400v2.100h-4.700v3.900h3.700v1.800h-3.700v3.300h-2.700z" fill="#fff"/>
<path d="M21.500 9h7.300v5.700h-2.200v-3.600h-2.700v3.600h-2.400z" fill="#fff"/>
<path d="M10 20.300h2l.8 2.200 1-2.200h1.400v6.300h-1.200l-1-1.500-1.200 1.500h-1.800z" fill="#e8f4fa"/>
<path d="M12.500 17l2.500 0 .3 9.500-2.300-2z" fill="#56b6ee"/>
<path d="M10.700 20.300l1.500 0 .4 5-1.600 1.300z" fill="#d8d0a0"/>
<g transform="translate(0 1.500)"><path d="M17 17.500c2-3.500 7-5.500 11-3.500 3 1.500 4.500 5 3.500 8-.5 2-1.500 3-2.500 3.500l-1 6.500h-9.500c-2-2.500-3.500-6-3-9 .3-2 .8-4 1.500-5.500z" fill="#e6508c"/>
<path d="M19 21c2-2 6-2.500 8.500-1 2 1.500 3 4 2.500 6.500-.5 2.500-1.500 4.500-3 5.500h-7.500c-1.500-2-2.300-4.500-2-7 .2-1.500.7-3 1.500-4z" fill="#f6b2cc"/>
<g transform="translate(23.300 24.800) scale(.8) translate(-23.300 -24.800)"><path d="M22 22.500c1.500-.8 3.300-.3 3.800 1.300.4 1.500-.3 3-1.800 3.400-1.500.3-2.800-.6-3-2.200-.1-1 .3-2 1-2.500z" fill="#15303c"/>
<path d="M21.800 22.800c.8-.6 2-.5 2.500.3l-2.600 2.400c-.4-.9-.4-2 .1-2.700z" fill="#a6e2f2"/></g>
<path d="M28.600 23.500c.8.500 1 2 .6 3.200-.5-.3-.9-1-1-1.800 0-.6.100-1.100.4-1.400z" fill="#203848"/></g>
</svg></div>
<div class="who"><span style="letter-spacing:-0.463px;">LeD</span><span class="arr" style="left:26px"></span><br><span style="letter-spacing:-0.007px;">W grze</span><br><span style="letter-spacing:-0.186px;">Command and Conquer: Red Alert 3</span></div>
<div class="dd"><i></i></div>
<div class="chat"><div class="mc">
<div class="msg me" style="top:-8px"><b><span style="letter-spacing:-0.163px;display:inline-block;white-space:pre;">LeD<i>:</i>&nbsp;</span></b><span style="letter-spacing:-0.079px;">teraz mam 17 i wiem ze powinno lepszy</span></div>
<div class="msg " style="top:13px"><b><span style="letter-spacing:-0.106px;display:inline-block;white-space:pre;">Jack Durden:&nbsp;</span></b><span style="letter-spacing:-0.048px;">na rt sa tak naprawde slabe filmiki</span></div>
<div class="msg " style="top:34px"><b><span style="letter-spacing:-0.106px;display:inline-block;white-space:pre;">Jack Durden:&nbsp;</span></b><span style="letter-spacing:-0.066px;">nie sposob uciec gdy w dupie guziec - Pablo Coelho</span></div>
<div class="msg " style="top:55px"><b><span style="letter-spacing:-0.106px;display:inline-block;white-space:pre;">Jack Durden:&nbsp;</span></b><span style="letter-spacing:-0.231px;">ej</span></div>
<div class="msg " style="top:76px"><b><span style="letter-spacing:-0.106px;display:inline-block;white-space:pre;">Jack Durden:&nbsp;</span></b><span style="letter-spacing:0.047px;">napisz jeszcze raz ze w swieta mi kupisz gre co ma</span></div>
<div class="msg" style="top:97px"><span style="letter-spacing:-0.093px;">-75 albo -90</span></div>
<div class="msg " style="top:118px"><b><span style="letter-spacing:-0.106px;display:inline-block;white-space:pre;">Jack Durden:&nbsp;</span></b><span style="letter-spacing:-0.073px;">bo nie walnalem screena</span></div>
<div class="msg me" style="top:139px"><b><span style="letter-spacing:-0.163px;display:inline-block;white-space:pre;">LeD<i>:</i>&nbsp;</span></b><span style="letter-spacing:-0.045px;">podpisuje to krwia</span></div>
</div>
<div class="sbt" style="top:23px;height:94px"></div>
<div class="sb" style="top:1px;height:20px"><i style="position:absolute;left:2.500px;top:7px;border-left:4px solid transparent;border-right:4px solid transparent;border-bottom:4px solid #d6d4d1"></i></div>
<div class="sb" style="top:117px;height:38px"><svg style="position:absolute;left:3px;top:15px;width:7px;height:7px" viewBox="0 0 7 7"><g fill="#d6d4d1"><rect x="0" y="0" width="1" height="1"/><rect x="0" y="2" width="1" height="1"/><rect x="0" y="4" width="1" height="1"/><rect x="0" y="6" width="1" height="1"/><rect x="2" y="0" width="1" height="1"/><rect x="2" y="2" width="1" height="1"/><rect x="2" y="4" width="1" height="1"/><rect x="2" y="6" width="1" height="1"/><rect x="4" y="0" width="1" height="1"/><rect x="4" y="2" width="1" height="1"/><rect x="4" y="4" width="1" height="1"/><rect x="4" y="6" width="1" height="1"/><rect x="6" y="0" width="1" height="1"/><rect x="6" y="2" width="1" height="1"/><rect x="6" y="4" width="1" height="1"/><rect x="6" y="6" width="1" height="1"/></g></svg></div>
<div class="sb" style="top:157px;height:19px"><i style="position:absolute;left:2.500px;top:8px;border-left:4px solid transparent;border-right:4px solid transparent;border-top:4px solid #d6d4d1"></i></div>
</div>
<div class="inp"><span class="pl">PL</span></div>
<div class="send"><span style="letter-spacing:-0.539px;">WYŚLIJ</span></div>
<div class="status"><span style="letter-spacing:-0.041px;">Ostatnia odebrana wiadomość: 1 sierpnia 2012 o godz. 15:52</span></div>
<svg class="grip" viewBox="0 0 11 11"><g fill="#cfcdca"><rect x="8" y="0" width="2" height="2"/><rect x="4" y="4" width="2" height="2"/><rect x="8" y="4" width="2" height="2"/><rect x="0" y="8" width="2" height="2"/><rect x="4" y="8" width="2" height="2"/><rect x="8" y="8" width="2" height="2"/></g></svg>
<div class="edge"></div>
</div>
<div class="win" style="left:885px;top:674px">
<div class="strip"></div>
<div class="rstrip"></div>
<div class="panel"></div>
<div class="tab act" style="left:7px;width:96px"><svg class="bub" viewBox="0 0 13 12"><defs><linearGradient id="bg20" x1="0" y1="0" x2="0" y2="1"><stop offset="0" stop-color="#cfcfcf"/><stop offset="1" stop-color="#8c8c8c"/></linearGradient></defs><path d="M2 0.500h9a1.500 1.500 0 0 1 1.500 1.500v4a1.500 1.500 0 0 1 -1.500 1.500h-3.200l-2.600 3.300v-3.300h-3.200a1.500 1.500 0 0 1 -1.500 -1.500v-4a1.500 1.500 0 0 1 1.500 -1.500z" fill="url(#bg20)"/></svg><span class="tx"><span style="letter-spacing:0.195px;">Fuck off</span></span><svg class="cl" style="left:83px" viewBox="0 0 9 9"><path d="M0.600 0.900l7.400 6.200M8 0.900l-7.400 6.200" stroke="#d6d4d2" stroke-width="1.500" fill="none"/></svg></div>
<svg class="wb" style="left:343px;top:7px;width:46px;height:10px" viewBox="0 0 46 10"><path d="M0 8.500h8" stroke="#c9c6c3" stroke-width="1.300" fill="none"/><rect x="17.500" y="1" width="9" height="8" fill="none" stroke="#c9c6c3" stroke-width="1"/><path d="M17 1h10" stroke="#c9c6c3" stroke-width="2"/><path d="M35.500 0.500l9 9M44.500 0.500l-9 9" stroke="#c9c6c3" stroke-width="1.300" fill="none"/></svg>
<div class="av"><svg viewBox="0 0 32 32"><rect width="32" height="32" rx="1.500" fill="#020202"/>
<path d="M7.500 1c2-1.500 5-1 6 1 2 0 3 1.500 3 3 2-.5 4 .5 4.500 2.500-2 1-4 .5-5-.5-1.500 1.500-4 1.500-5.500.5-1.500-1.500-3-4-3-6.500z" fill="#e4508c"/>
<path d="M9 3c1.500-1 3.500 0 4 2 .3 1.500-1 2.700-2.500 2.300-1.200-.8-1.700-2.800-1.500-4.300z" fill="#f4a8c6"/>
<path d="M9.500 6.500c1 .8 2.500 1 3.500.5l1 2.500-3.500 1z" fill="#ee7aa8"/>
<path d="M7.500 9.500c1.500-1.500 3-1 3.500.5l-.5 8-2 1c-1.500-3-2-6.500-1-9.500z" fill="#e4508c"/>
<path d="M2 9h2.700v5.600h-2.700z" fill="#fdf4f6"/><path d="M2 18h6.200v2.100h-6.200z" fill="#fff"/>
<path d="M10.600 9h7.400v2.100h-4.700v3.900h3.700v1.800h-3.700v3.300h-2.700z" fill="#fff"/>
<path d="M21.500 9h7.300v5.700h-2.200v-3.600h-2.700v3.600h-2.400z" fill="#fff"/>
<path d="M10 20.300h2l.8 2.200 1-2.200h1.400v6.300h-1.200l-1-1.500-1.200 1.500h-1.800z" fill="#e8f4fa"/>
<path d="M12.500 17l2.500 0 .3 9.500-2.300-2z" fill="#56b6ee"/>
<path d="M10.700 20.300l1.500 0 .4 5-1.600 1.300z" fill="#d8d0a0"/>
<g transform="translate(0 1.500)"><path d="M17 17.500c2-3.500 7-5.500 11-3.500 3 1.500 4.500 5 3.500 8-.5 2-1.500 3-2.500 3.500l-1 6.500h-9.500c-2-2.500-3.500-6-3-9 .3-2 .8-4 1.500-5.500z" fill="#e6508c"/>
<path d="M19 21c2-2 6-2.500 8.500-1 2 1.500 3 4 2.500 6.500-.5 2.500-1.500 4.500-3 5.500h-7.500c-1.500-2-2.300-4.500-2-7 .2-1.500.7-3 1.500-4z" fill="#f6b2cc"/>
<g transform="translate(23.300 24.800) scale(.8) translate(-23.300 -24.800)"><path d="M22 22.500c1.500-.8 3.300-.3 3.800 1.300.4 1.500-.3 3-1.800 3.400-1.500.3-2.800-.6-3-2.200-.1-1 .3-2 1-2.500z" fill="#15303c"/>
<path d="M21.800 22.800c.8-.6 2-.5 2.500.3l-2.600 2.400c-.4-.9-.4-2 .1-2.700z" fill="#a6e2f2"/></g>
<path d="M28.600 23.500c.8.500 1 2 .6 3.200-.5-.3-.9-1-1-1.800 0-.6.100-1.100.4-1.400z" fill="#203848"/></g>
</svg></div>
<div class="who"><span style="letter-spacing:0.195px;">Fuck off</span><span class="arr" style="left:46px"></span><br><span style="letter-spacing:0.026px;">W grze</span><br><span style="letter-spacing:0.045px;">Grand Theft Auto: San Andreas</span></div>
<div class="dd"><i></i></div>
<div class="chat"><div class="mc">
<div class="msg " style="top:-8px"><b><span style="letter-spacing:-0.125px;display:inline-block;white-space:pre;">Fortek:&nbsp;</span></b><span style="letter-spacing:-0.329px;">nie</span></div>
<div class="msg " style="top:13px"><b><span style="letter-spacing:-0.125px;display:inline-block;white-space:pre;">Fortek:&nbsp;</span></b><span style="letter-spacing:-0.026px;">dostane od ciebie na gwiazdke :)</span></div>
<div class="msg me" style="top:34px"><b><span style="letter-spacing:0.164px;display:inline-block;white-space:pre;">Fuck off<i>:</i>&nbsp;</span></b><span style="letter-spacing:-0.237px;">chuj :|</span></div>
<div class="msg me" style="top:55px"><b><span style="letter-spacing:0.164px;display:inline-block;white-space:pre;">Fuck off<i>:</i>&nbsp;</span></b><span style="letter-spacing:-0.191px;">pamieta skubany</span></div>
<div class="msg " style="top:76px"><b><span style="letter-spacing:-0.125px;display:inline-block;white-space:pre;">Fortek:&nbsp;</span></b><span style="letter-spacing:-0.125px;">mam screena na tapecie</span></div>
<div class="msg me" style="top:97px"><b><span style="letter-spacing:0.164px;display:inline-block;white-space:pre;">Fuck off<i>:</i>&nbsp;</span></b><span style="letter-spacing:-0.129px;">pic or didn&#39;t happen</span></div>
<div class="msg me" style="top:118px"><b><span style="letter-spacing:0.164px;display:inline-block;white-space:pre;">Fuck off<i>:</i>&nbsp;</span></b><span style="letter-spacing:0.006px;">udowodnij</span></div>
<div class="msg " style="top:139px"><b><span style="letter-spacing:-0.125px;display:inline-block;white-space:pre;">Fortek:&nbsp;</span></b><span style="letter-spacing:-0.500px;">k</span></div>
</div>
<div class="sbt" style="top:23px;height:65px"></div>
<div class="sb" style="top:1px;height:20px"><i style="position:absolute;left:2.500px;top:7px;border-left:4px solid transparent;border-right:4px solid transparent;border-bottom:4px solid #d6d4d1"></i></div>
<div class="sb" style="top:88px;height:67px"><svg style="position:absolute;left:3px;top:30px;width:7px;height:7px" viewBox="0 0 7 7"><g fill="#d6d4d1"><rect x="0" y="0" width="1" height="1"/><rect x="0" y="2" width="1" height="1"/><rect x="0" y="4" width="1" height="1"/><rect x="0" y="6" width="1" height="1"/><rect x="2" y="0" width="1" height="1"/><rect x="2" y="2" width="1" height="1"/><rect x="2" y="4" width="1" height="1"/><rect x="2" y="6" width="1" height="1"/><rect x="4" y="0" width="1" height="1"/><rect x="4" y="2" width="1" height="1"/><rect x="4" y="4" width="1" height="1"/><rect x="4" y="6" width="1" height="1"/><rect x="6" y="0" width="1" height="1"/><rect x="6" y="2" width="1" height="1"/><rect x="6" y="4" width="1" height="1"/><rect x="6" y="6" width="1" height="1"/></g></svg></div>
<div class="sb" style="top:157px;height:19px"><i style="position:absolute;left:2.500px;top:8px;border-left:4px solid transparent;border-right:4px solid transparent;border-top:4px solid #d6d4d1"></i></div>
</div>
<div class="inp"></div>
<div class="send"><span style="letter-spacing:-0.539px;">WYŚLIJ</span></div>
<div class="status"><span style="letter-spacing:-0.054px;">Ostatnia odebrana wiadomość: 13 sierpnia 2012 o godz. 19:07</span></div>
<svg class="grip" viewBox="0 0 11 11"><g fill="#cfcdca"><rect x="8" y="0" width="2" height="2"/><rect x="4" y="4" width="2" height="2"/><rect x="8" y="4" width="2" height="2"/><rect x="0" y="8" width="2" height="2"/><rect x="4" y="8" width="2" height="2"/><rect x="8" y="8" width="2" height="2"/></g></svg>
<div class="edge"></div>
</div>
<div class="taskline"></div>
</body>
</html>
